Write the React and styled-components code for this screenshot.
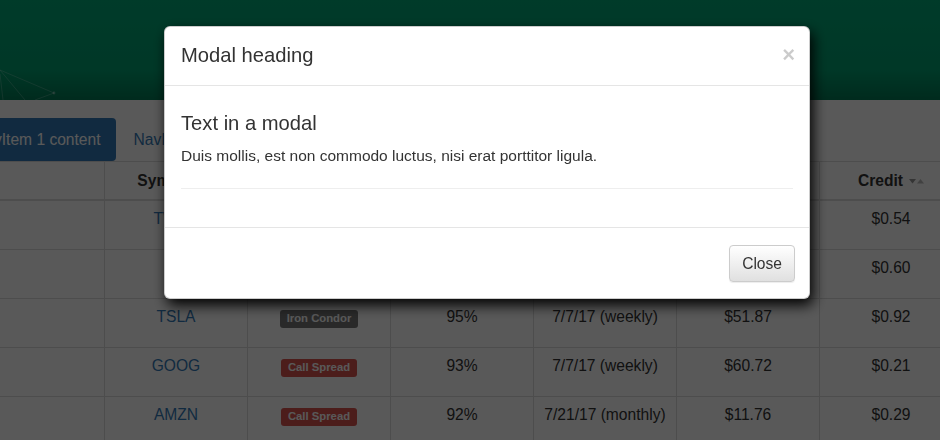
import React from 'react';
import styled, { createGlobalStyle } from 'styled-components';

const GlobalStyle = createGlobalStyle`
  html, body {
    margin: 0;
    padding: 0;
    background: #fff;
    overflow: hidden;
  }
  body {
    font-family: "Liberation Sans", Arial, sans-serif;
    font-size: 15.6px;
    color: #333;
  }
  * {
    box-sizing: border-box;
  }
`;

const PageWrapper = styled.div`
  width: 940px;
  height: 440px;
  overflow: hidden;
`;
const Hero = styled.header`
  position: relative;
  height: 100px;
  background: linear-gradient(to bottom, #00a877 0%, #00a070 70%, #007a55 100%);
  overflow: hidden;
`;
const HeroMesh = styled.svg`
  position: absolute;
  left: 0;
  top: 0;
`;
const Content = styled.main`
  margin-left: -39px;
  padding-top: 18px;
`;
const NavPills = styled.ul`
  display: flex;
  gap: 3px;
  list-style: none;
  margin: 0 0 0 -2px;
  padding: 0;
`;
const Pill = styled.li`
  padding: 11px 15px;
  line-height: 21px;
  border-radius: 4px;
  background: ${p => (p.active ? '#337ab7' : 'transparent')};
  color: ${p => (p.active ? '#fff' : '#337ab7')};
  white-space: nowrap;
`;
const Table = styled.table`
  border-collapse: collapse;
  table-layout: fixed;
  width: 1001px;
  background: #fff;
`;
const Th = styled.th`
  width: 143px;
  padding: 8px;
  line-height: 21px;
  font-weight: bold;
  text-align: center;
  border: 1px solid #ddd;
  border-bottom: 2px solid #ddd;
  white-space: nowrap;
`;
const Td = styled.td`
  height: 49px;
  padding: 8px;
  line-height: 20px;
  text-align: center;
  vertical-align: top;
  border: 1px solid #ddd;
  white-space: nowrap;
`;
const SymbolLink = styled.a`
  color: #337ab7;
  text-decoration: none;
`;
const Label = styled.span`
  display: inline-block;
  padding: 3px 7px 4px;
  font-size: 11.3px;
  font-weight: bold;
  line-height: 11.5px;
  color: #fff;
  border-radius: 3px;
  vertical-align: 0;
  background: ${p => (p.kind === 'danger' ? '#d9534f' : '#777')};
`;
const Caret = styled.svg`
  margin-left: 6px;
  vertical-align: 2px;
`;

const Backdrop = styled.div`
  position: fixed;
  inset: 0;
  background: rgba(0, 0, 0, 0.65);
`;
const Dialog = styled.div`
  width: 646px;
  margin: 26px 0 0 164px;
  background: #fff;
  border: 1px solid rgba(0, 0, 0, 0.2);
  border-radius: 6px;
  box-shadow: 3px 6px 14px rgba(0, 0, 0, 1);
`;
const DialogHeader = styled.div`
  display: flex;
  align-items: center;
  justify-content: space-between;
  padding: 15px 14px 16px 16px;
  border-bottom: 1px solid #e5e5e5;
`;
const DialogTitle = styled.h4`
  margin: 0;
  font-size: 20.2px;
  font-weight: normal;
  line-height: 27px;
  color: #333;
`;
const CloseX = styled.button`
  border: 0;
  background: none;
  padding: 0;
  margin-top: -2px;
  font-family: "Liberation Sans", Arial, sans-serif;
  font-size: 22px;
  font-weight: bold;
  line-height: 1;
  color: #000;
  opacity: 0.2;
  cursor: pointer;
`;
const DialogBody = styled.div`
  padding: 16px 16px 17px;
`;
const BodyHeading = styled.h4`
  margin: 10px 0 11px;
  font-size: 20.2px;
  font-weight: normal;
  line-height: 22px;
  color: #333;
`;
const BodyText = styled.p`
  margin: 0 0 10px;
  font-size: 15.5px;
  line-height: 22px;
`;
const Rule = styled.hr`
  margin: 21px 0;
  border: 0;
  border-top: 1px solid #eee;
`;
const DialogFooter = styled.div`
  display: flex;
  justify-content: flex-end;
  padding: 17px 14px 16px;
  border-top: 1px solid #e5e5e5;
`;
const Button = styled.button`
  height: 37px;
  padding: 0 12px;
  font-family: "Liberation Sans", Arial, sans-serif;
  font-size: 15.6px;
  color: #333;
  background: linear-gradient(to bottom, #fff 0%, #e0e0e0 100%);
  border: 1px solid #ccc;
  border-radius: 4px;
  box-shadow: inset 0 1px 0 rgba(255, 255, 255, 0.15), 0 1px 1px rgba(0, 0, 0, 0.075);
  cursor: pointer;
`;

const trades = [
  { symbol: 'TWTR', type: 'Call Spread', prob: '96%', exp: '7/7/17 (weekly)', price: '$19.42', credit: '$0.54' },
  { symbol: 'FB', type: 'Iron Condor', prob: '95%', exp: '7/7/17 (weekly)', price: '$33.18', credit: '$0.60' },
  { symbol: 'TSLA', type: 'Iron Condor', prob: '95%', exp: '7/7/17 (weekly)', price: '$51.87', credit: '$0.92' },
  { symbol: 'GOOG', type: 'Call Spread', prob: '93%', exp: '7/7/17 (weekly)', price: '$60.72', credit: '$0.21' },
  { symbol: 'AMZN', type: 'Call Spread', prob: '92%', exp: '7/21/17 (monthly)', price: '$11.76', credit: '$0.29' },
];

function SortCaret() {
  return (
    <Caret width="15" height="5" viewBox="0 0 15 5">
      <polygon points="0,0 7,0 3.5,4.5" fill="#999" />
      <polygon points="8,4.5 15,4.5 11.5,0" fill="#bbb" />
    </Caret>
  );
}

function Mesh() {
  return (
    <HeroMesh width="120" height="100" viewBox="0 0 120 100">
      <g stroke="rgba(255,255,255,0.28)" strokeWidth="0.8" fill="none">
        <line x1="0" y1="70" x2="54" y2="93" />
        <line x1="0" y1="70" x2="25" y2="100" />
        <line x1="54" y1="93" x2="35" y2="100" />
        <line x1="0" y1="74" x2="3" y2="100" />
      </g>
      <circle cx="54" cy="93" r="1.4" fill="rgba(255,255,255,0.35)" />
    </HeroMesh>
  );
}

function TradeRow({ trade }) {
  return (
    <tr>
      <Td />
      <Td><SymbolLink href="#">{trade.symbol}</SymbolLink></Td>
      <Td><Label kind={trade.type === 'Call Spread' ? 'danger' : 'default'}>{trade.type}</Label></Td>
      <Td>{trade.prob}</Td>
      <Td>{trade.exp}</Td>
      <Td>{trade.price}</Td>
      <Td>{trade.credit}</Td>
    </tr>
  );
}

export default function App() {
  return (
    <PageWrapper>
      <GlobalStyle />
      <Hero>
        <Mesh />
      </Hero>
      <Content>
        <NavPills>
          <Pill active>NavItem 1 content</Pill>
          <Pill>NavItem 2 content</Pill>
        </NavPills>
        <Table>
          <thead>
            <tr>
              <Th />
              <Th>Symbol<SortCaret /></Th>
              <Th>Type<SortCaret /></Th>
              <Th>Probability<SortCaret /></Th>
              <Th>Expiration<SortCaret /></Th>
              <Th>Price<SortCaret /></Th>
              <Th>Credit<SortCaret /></Th>
            </tr>
          </thead>
          <tbody>
            {trades.map(t => <TradeRow key={t.symbol} trade={t} />)}
          </tbody>
        </Table>
      </Content>
      <Backdrop>
        <Dialog>
          <DialogHeader>
            <DialogTitle>Modal heading</DialogTitle>
            <CloseX aria-label="Close">×</CloseX>
          </DialogHeader>
          <DialogBody>
            <BodyHeading>Text in a modal</BodyHeading>
            <BodyText>Duis mollis, est non commodo luctus, nisi erat porttitor ligula.</BodyText>
            <Rule />
          </DialogBody>
          <DialogFooter>
            <Button>Close</Button>
          </DialogFooter>
        </Dialog>
      </Backdrop>
    </PageWrapper>
  );
}
